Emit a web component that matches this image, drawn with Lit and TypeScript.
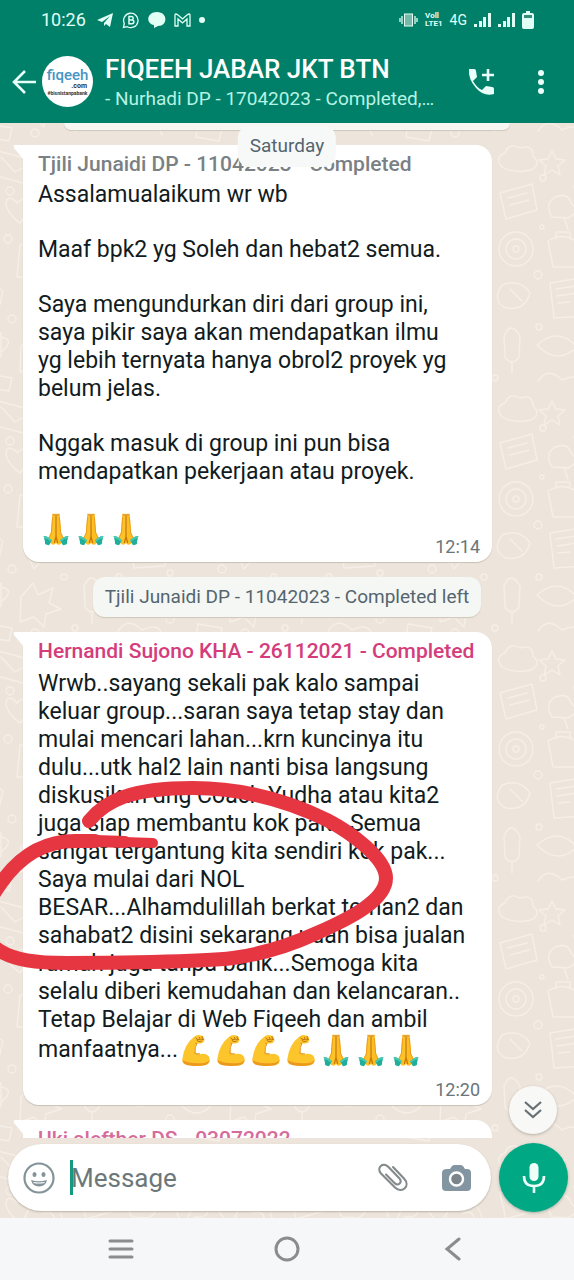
import { LitElement, html, css } from "lit";
import { customElement, property } from "lit/decorators.js";

const pray = () => html`<svg class="emoji" role="img" aria-label="folded hands" width="28" height="33" viewBox="0 0 84 99">
  <path d="M31 2h10l1 88q-4 7-13 4l-13-12 11-24z" fill="#fdc228"/>
  <path d="M53 2H43l-1 88q4 7 13 4l13-12-11-24z" fill="#fdbe22"/>
  <path d="M32 12l-4 48-10 20M52 12l4 48 10 20" fill="none" stroke="#f09c1c" stroke-width="3"/>
  <path d="M42 4v66l-5 20M42 70l5 20" fill="none" stroke="#c97908" stroke-width="4"/>
  <path d="M32 3h8v5h-8zM44 3h8v5h-8z" fill="#e9a13a"/>
  <path d="M5 69q10-1 25 13l-9 15Q6 95 9 87z" fill="#1fae9b"/>
  <path d="M79 69q-10-1-25 13l9 15q15-2 12-10z" fill="#1fae9b"/>
  <path d="M5 69q10-1 25 13l-3 4Q16 76 6 75zM79 69q-10-1-25 13l3 4q11-10 21-11z" fill="#4ccab4"/>
</svg>`;

const arm = () => html`<svg class="emoji" role="img" aria-label="flexed biceps" width="28" height="33" viewBox="0 0 87 99">
  <path d="M38 7Q46-1 60 3q9 2 9 12 0 11-9 12-8 2-14-1-8 16-5 29 8 8 18 5 28-1 27 20-1 16-25 17-27 2-46-3Q-1 91 1 76 7 30 38 7z" fill="#fdc52c"/>
  <path d="M2 80q2 13 16 15 24 4 46 1 20-2 22-18-7 10-26 11-38 2-58-9z" fill="#ec981d"/>
  <path d="M41 26q4 3 6 0-8 14-6 29" fill="none" stroke="#e69119" stroke-width="3"/>
  <path d="M38 56q7 6 18 4" fill="none" stroke="#dd8914" stroke-width="3"/>
  <path d="M43 11q7 9 13 4M54 9q2 9 10 7M46 18q6 8 14 3M62 6q-3 7 6 10" fill="none" stroke="#b86f10" stroke-width="3" stroke-linecap="round"/>
</svg>`;

const wallpaper = html`<svg class="wallpaper" aria-hidden="true" width="100%" height="100%">
  <defs>
    <pattern id="doodles" width="210" height="250" patternUnits="userSpaceOnUse" x="70" y="20">
      <g fill="none" stroke="#f6efe7" stroke-width="1.4" stroke-linejoin="round" stroke-linecap="round">
        <path d="M12 24q-8-10 3-14 4-11 15-5 13-4 13 8 9 8-2 14-16 4-29-3z"/>
        <path d="M62 8l4 8 9 1-7 6 2 9-8-5-8 5 2-9-7-6 9-1z"/>
        <circle cx="104" cy="22" r="15"/><circle cx="99" cy="18" r="3"/><circle cx="110" cy="18" r="3"/><path d="M97 28q7 6 14-1"/>
        <path d="M138 8l34 9-5 24-34-9zM141 14l14 15 13-7"/>
        <path d="M190 6q12 4 6 16l-12 19q-8 2-7-7z"/>
        <path d="M10 50l32-9 5 26-31 9zM18 55l19-5M20 62l19-5"/>
        <path d="M62 74q-8-13 3-20 13-5 16 6 10 9-3 15zM74 75l4 11"/>
        <path d="M102 54l10 31M112 85l14-26M96 60l31-7M126 58q11-4 12 7t-14 9"/>
        <path d="M157 60c-10-13-20 3 3 20 17-20 9-32-3-20z"/>
        <path d="M178 62q20-7 24 13t-20 17-15-18M183 70q10-3 11 5t-9 7"/>
        <circle cx="26" cy="106" r="17"/><circle cx="26" cy="106" r="10"/><circle cx="26" cy="106" r="3"/>
        <path d="M58 98q15-10 31 2l-4 24H63zM66 96v-7h14v7"/>
        <path d="M107 106l33 15-4 7-34-15zM111 108l-3 7"/>
        <path d="M160 102h26l4 32h-33zM166 102q7-16 14 0M167 114h14"/>
        <path d="M12 142q18-7 28 8-5 18-24 15-15-7-4-23zM20 146l12 12"/>
        <path d="M60 140l31-5 4 38-31 2zM66 146l20-3M67 153l20-3M68 160l12-1"/>
        <path d="M116 148l13-10 14 10-4 17h-19zM124 165v-12h9v12"/>
        <path d="M164 155l19-12 17 17-10 8-5-5-11 13z"/>
        <path d="M14 193q7-16 16 0l-1 21q-7 10-14 0zM22 218v12"/>
        <path d="M47 202q21-19 40 2-20 19-40-2zM86 203l10-8v16z"/>
        <path d="M112 190h29v23q-14 14-29 0zM141 194q15 3 0 15"/>
        <path d="M161 204l12-14 5 12 15-7-4 15 12 6-15 5-2 13-10-10-14 5z"/>
        <path d="M48 238q10-15 24-1 17-8 20 5M128 231l24 4-3 13-23-4z"/>
        <circle cx="53" cy="35" r="3"/><circle cx="87" cy="44" r="3"/><circle cx="150" cy="48" r="4"/><circle cx="52" cy="84" r="2"/><circle cx="92" cy="94" r="3"/><circle cx="148" cy="96" r="4"/><circle cx="200" cy="121" r="4"/><circle cx="48" cy="132" r="4"/><circle cx="105" cy="141" r="3"/><circle cx="152" cy="176" r="4"/><circle cx="49" cy="184" r="3"/><circle cx="100" cy="180" r="3"/><circle cx="100" cy="226" r="4"/><circle cx="5" cy="235" r="3"/><circle cx="175" cy="240" r="4"/><circle cx="204" cy="184" r="3"/>
      </g>
    </pattern>
  </defs>
  <rect width="100%" height="100%" fill="url(#doodles)"/>
</svg>`;

@customElement("status-bar")
class StatusBar extends LitElement {
  static styles = css`
    :host { display: flex; align-items: center; justify-content: space-between; height: 40px; padding: 0 40px 0 41px; color: #e2fff6; }
    .group { display: flex; align-items: center; gap: 8px; }
    .clock { font-size: 18px; line-height: 20px; margin-right: 2px; }
    .net { font-size: 14px; line-height: 20px; }
    .volte { font-size: 8px; line-height: 8px; font-weight: 700; }
    .volte span { display: block; }
    .group.right { gap: 7px; }
  `;
  private bars = () => html`<svg width="17" height="16" viewBox="0 0 17 16" fill="#e2fff6" aria-hidden="true"><rect x="0" y="12" width="3" height="3"/><rect x="5" y="9" width="3" height="6"/><rect x="9" y="5" width="3" height="10"/><rect x="14" y="1" width="3" height="14"/></svg>`;
  render() {
    return html`
      <div class="group">
        <span class="clock">10:26</span>
        <svg width="18" height="16" viewBox="0 0 18 16" aria-hidden="true"><path d="M17 1L1 8l5 2 8-6-6 7v3l2-2 4 3z" fill="#e2fff6"/></svg>
        <svg width="18" height="18" viewBox="0 0 18 18" fill="none" stroke="#e2fff6" stroke-width="1.3" aria-hidden="true"><path d="M1.500 16.500l.8-4a7.200 7.200 0 1 1 3 3.200z"/><path d="M7 5.500h2.500a1.700 1.700 0 0 1 0 3.500H7zM7 9h3a1.800 1.800 0 0 1 0 3.700H7z" stroke-width="1.5"/></svg>
        <svg width="18" height="18" viewBox="0 0 18 18" fill="#e2fff6" aria-hidden="true"><path d="M9 1c11 0 11 14 1 14l-4 2v-3C-3 12-1 1 9 1z"/></svg>
        <svg width="17" height="14" viewBox="0 0 17 14" fill="none" stroke="#e2fff6" stroke-width="1.3" aria-hidden="true"><path d="M1 12V2q0-2 3 0l4.500 4L13 2q3-2 3 0v11h-3V6l-4.500 4L4 6v7H1z"/></svg>
        <svg width="8" height="8" viewBox="0 0 8 8" fill="#e2fff6" aria-hidden="true"><circle cx="3" cy="4" r="3"/></svg>
      </div>
      <div class="group right">
        <svg width="19" height="14" viewBox="0 0 19 14" fill="none" stroke="#e2fff6" aria-hidden="true"><rect x="5.500" y="1" width="8" height="12" fill="#76b9a8"/><path d="M3 3v8M1 5v4M16 3v8M18 5v4" stroke-width="1.3"/></svg>
        <span class="volte"><span>Voll</span><span>LTE1</span></span>
        <span class="net">4G</span>
        ${this.bars()}
        ${this.bars()}
        <svg width="12" height="20" viewBox="0 0 12 20" aria-hidden="true"><path d="M4 1h4v2h2q2 0 2 2v12q0 2-2 2H2q-2 0-2-2V5q0-2 2-2h2z" fill="#e2fff6"/><rect x="2" y="5" width="8" height="3" fill="#2f8f7b"/></svg>
      </div>`;
  }
}

@customElement("chat-header")
class ChatHeader extends LitElement {
  static styles = css`
    :host { display: flex; align-items: center; height: 83px; padding: 0 20px 0 12px; color: #fff; }
    button { border: 0; background: none; padding: 0; color: inherit; display: flex; flex: none; }
    .avatar { flex: none; width: 51px; height: 51px; border-radius: 50%; background: #fff; margin-left: 5px; display: flex; flex-direction: column; align-items: center; justify-content: center; }
    .brand { font-size: 15px; line-height: 16px; font-weight: 500; color: #4795c4; }
    .dotcom { font-size: 7px; line-height: 7px; font-weight: 700; color: #333; align-self: flex-end; margin-right: 6px; }
    .tag { font-size: 5px; line-height: 7px; font-weight: 700; color: #333; }
    .titles { flex: 1; min-width: 0; margin-left: 12px; padding-top: 3px; }
    h1 { margin: 0; font-size: 26px; line-height: 32px; font-weight: 500; white-space: nowrap; }
    p { margin: 0; font-size: 19px; line-height: 28px; color: #b5f3e3; white-space: nowrap; }
    .more { margin-left: 32px; }
  `;
  render() {
    return html`
      <button aria-label="Back"><svg width="25" height="26" viewBox="0 0 25 26" fill="none" stroke="#e6fff8" stroke-width="2.6"><path d="M24 13H2M13 2L2 13l11 11"/></svg></button>
      <div class="avatar"><span class="brand">fiqeeh</span><span class="dotcom">.com</span><span class="tag">#bisnistanpabank</span></div>
      <div class="titles"><h1>FIQEEH JABAR JKT BTN</h1><p>- Nurhadi DP - 17042023 - Completed,…</p></div>
      <button aria-label="Add call"><svg width="30" height="30" viewBox="0 0 30 30"><path d="M3 2h5q2 0 2 2l1 6-4 4q4 7 9 9l4-4 6 1q2 0 2 2v5q-10 3-18-6T3 2z" fill="#eafff9"/><path d="M22 2v12M16 8h12" stroke="#eafff9" stroke-width="2.6"/></svg></button>
      <button class="more" aria-label="More options"><svg width="26" height="28" viewBox="0 0 26 28" fill="#eafff9"><circle cx="13" cy="5" r="3"/><circle cx="13" cy="14" r="3"/><circle cx="13" cy="23" r="3"/></svg></button>`;
  }
}

@customElement("chat-bubble")
class ChatBubble extends LitElement {
  @property() sender = "";
  @property() time = "";
  @property() tone = "grey";
  @property({ type: Boolean }) inline = false;
  static styles = css`
    :host { display: block; position: relative; flex: none; margin: 0 82px 0 23px; padding: 7px 12px 5px 15px; background: #fefffe; border-radius: 0 16px 16px 16px; box-shadow: 0 1px 1px #c9c1b5; color: #111b21; }
    .tail { position: absolute; left: -10px; top: 0; }
    .sender { font-size: 21px; line-height: 24px; font-weight: 500; white-space: nowrap; margin-bottom: 5px; }
    .grey { color: #7a8083; }
    .pink { color: #d43c7c; margin-bottom: 7px; }
    .rose { color: #d56c9c; }
    .foot { display: flex; flex-direction: column; }
    .time { font-size: 18px; line-height: 20px; color: #6a7579; align-self: flex-end; margin-top: 13px; }
    .foot.inline { flex-direction: row; justify-content: space-between; }
    .inline .time { margin-top: 24px; }
  `;
  render() {
    return html`
      <svg class="tail" width="11" height="16" viewBox="0 0 11 16" aria-hidden="true"><path d="M11 0H2Q0 0 1 3l10 12z" fill="#fefffe"/></svg>
      <div class="sender ${this.tone}">${this.sender}</div>
      <slot></slot>
      <div class="foot ${this.inline ? "inline" : ""}"><slot name="last"></slot><span class="time">${this.time}</span></div>`;
  }
}

@customElement("message-composer")
class MessageComposer extends LitElement {
  static styles = css`
    :host { position: relative; display: flex; align-items: center; gap: 8px; padding: 5px 6px 6px 8px; }
    button { border: 0; background: none; padding: 0; display: flex; align-items: center; justify-content: center; flex: none; }
    .box { flex: 1; min-width: 0; display: flex; align-items: center; height: 67px; padding: 0 18px 0 14px; box-sizing: border-box; border-radius: 34px; background: #fefffe; box-shadow: 0 1px 2px #b9b1a6; }
    .caret { width: 3px; height: 35px; background: #159a80; margin: 0 -2px 0 14px; flex: none; }
    input { flex: 1; min-width: 0; border: 0; outline: 0; padding: 0; background: none; font: 26px/36px Roboto, sans-serif; color: #111b21; }
    input::placeholder { color: #6c7779; opacity: 1; }
    .camera { margin-left: 32px; }
    .mic { width: 69px; height: 69px; border-radius: 50%; background: #00a884; box-shadow: 0 1px 3px #9fb0a5; }
  `;
  render() {
    return html`
      <div class="box">
        <button aria-label="Emoji"><svg width="34" height="34" viewBox="0 0 34 34" fill="none" stroke="#84929a" stroke-width="2.2"><circle cx="17" cy="17" r="14.500"/><ellipse cx="12.500" cy="13.500" rx="2" ry="2.600" fill="#84929a" stroke="none"/><ellipse cx="21.500" cy="13.500" rx="2" ry="2.600" fill="#84929a" stroke="none"/><path d="M9 19q8 2.500 16 0-1.500 6.500-8 6.500T9 19z" fill="#84929a" stroke="none"/><path d="M11.500 21.500q5.500 1 11 0" stroke="#fefffe" stroke-width="1.200"/></svg></button>
        <span class="caret"></span>
        <input type="text" aria-label="Message" placeholder="Message">
        <button aria-label="Attach"><svg width="32" height="32" viewBox="0 0 32 32" fill="none" stroke="#84898b" stroke-width="2.1" stroke-linecap="round" stroke-linejoin="round"><path d="M16 5l11 11.500c7 7.500-2 15.500-9 9L4 11.500C-1 5.500 6-.5 11.500 5l11 11.500c3.500 4-1.500 8-5 4.500L9 12.500"/></svg></button>
        <button class="camera" aria-label="Camera"><svg width="32" height="30" viewBox="0 0 32 30"><path d="M6 6h3l2-3q1-1 3-1h5q2 0 3 1l2 3h2q4 0 4 4v14q0 4-4 4H5q-4 0-4-4V10q0-4 5-4z" fill="#8395a0"/><circle cx="15.500" cy="16" r="6.500" fill="#7b858a" stroke="#fff" stroke-width="2.4"/></svg></button>
      </div>
      <button class="mic" aria-label="Record voice message"><svg width="24" height="34" viewBox="0 0 24 34" fill="none" stroke="#eefff9" stroke-width="2.6"><rect x="7.500" y="2" width="9" height="18" rx="4.500" fill="#eefff9" stroke="none"/><path d="M2 15q0 10 10 10t10-10M12 25v7"/></svg></button>`;
  }
}

@customElement("app-root")
class AppRoot extends LitElement {
  static styles = css`
    :host { display: flex; flex-direction: column; height: 100vh; overflow: hidden; font-family: Roboto, sans-serif; }
    .top { background: #008069; flex: none; }
    .chat { position: relative; flex: 1; min-height: 0; display: flex; flex-direction: column; background: #ede4db; overflow: hidden; }
    .wallpaper { position: absolute; inset: 0; }
    .list { position: relative; flex: 1; min-height: 0; overflow: hidden; display: flex; flex-direction: column; gap: 15px; }
    .previous { flex: none; height: 7px; margin: 0 64px; border-radius: 0 0 12px 12px; background: #f6f6f3; box-shadow: 0 1px 1px #cfc7bc; }
    .date { position: absolute; top: 3px; left: 50%; transform: translateX(-50%); padding: 7px 12px 8px; border-radius: 12px; background: #f7f9f8; color: #54656f; font-size: 19px; line-height: 26px; }
    .notice { flex: none; align-self: center; margin: 0; padding: 7px 12px; border-radius: 12px; background: #f5f7f4; box-shadow: 0 1px 1px #cfc7bc; color: #54656f; font-size: 19px; line-height: 26px; }
    .text { margin: 0 0 27px; font-size: 23px; line-height: 28px; }
    .text.end { margin: 0; }
    .emoji { vertical-align: middle; margin: 0 3px 0 4px; }
    .ink { position: absolute; left: 0; top: 650px; pointer-events: none; }
    .jump { position: absolute; right: 17px; bottom: 84px; width: 48px; height: 48px; border: 0; border-radius: 50%; padding: 0; background: #f8f9f7; box-shadow: 0 1px 3px #b8b0a6; display: flex; align-items: center; justify-content: center; }
    nav { flex: none; display: flex; height: 62px; padding: 0 38px; background: #f6f7f9; }
    nav button { flex: 1; border: 0; background: none; padding: 0; display: flex; align-items: center; justify-content: center; }
    message-composer { flex: none; }
  `;
  render() {
    return html`
      <header class="top"><status-bar></status-bar><chat-header></chat-header></header>
      <main class="chat">
        ${wallpaper}
        <div class="list">
          <div class="previous"></div>
          <chat-bubble sender="Tjili Junaidi DP - 11042023 - Completed" time="12:14" inline>
            <p class="text">Assalamualaikum wr wb</p>
            <p class="text">Maaf bpk2 yg Soleh dan hebat2 semua.</p>
            <p class="text">Saya mengundurkan diri dari group ini, saya pikir saya akan mendapatkan ilmu<br>yg lebih ternyata hanya obrol2 proyek yg belum jelas.</p>
            <p class="text">Nggak masuk di group ini pun bisa mendapatkan pekerjaan atau proyek.</p>
            <p class="text end" slot="last">${pray()}${pray()}${pray()}</p>
          </chat-bubble>
          <p class="notice">Tjili Junaidi DP - 11042023 - Completed left</p>
          <chat-bubble sender="Hernandi Sujono KHA - 26112021 - Completed" tone="pink" time="12:20">
            <p class="text end">Wrwb..sayang sekali pak kalo sampai keluar group...saran saya tetap stay dan mulai mencari lahan...krn kuncinya itu dulu...utk hal2 lain nanti bisa langsung diskusikan dng Coach Yudha atau kita2 juga siap membantu kok pak...Semua sangat tergantung kita sendiri kok pak... Saya mulai dari NOL<br>BESAR...Alhamdulillah berkat teman2 dan sahabat2 disini sekarang udah bisa jualan rumah juga tanpa bank...Semoga kita selalu diberi kemudahan dan kelancaran.. Tetap Belajar di Web Fiqeeh dan ambil manfaatnya...${arm()}${arm()}${arm()}${arm()}${pray()}${pray()}${pray()}</p>
          </chat-bubble>
          <chat-bubble sender="Uki alefther DS - 03072022" tone="rose"></chat-bubble>
          <div class="date">Saturday</div>
          <svg class="ink" aria-hidden="true" width="400" height="210" viewBox="0 773 400 210" fill="none" stroke="#e63642" stroke-linecap="round" stroke-linejoin="round">
            <path stroke-width="14" d="M89 821C105 801 130 788 193 788 245 788 292 803 327 820 350 832 386 858 386 878 386 900 351 918 317 933 293 944 262 954 233 958 200 962 105 963 67 963 35 963 15 960 0 951-26 935-16 906 1 883 17 860 40 841 75 841H95"/>
            <path stroke-width="12" d="M95 841L125 842"/>
            <path stroke-width="10" d="M95 841L153 843"/>
          </svg>
        </div>
        <message-composer></message-composer>
        <button class="jump" aria-label="Scroll to latest"><svg width="20" height="18" viewBox="0 0 20 18" fill="none" stroke="#667075" stroke-width="2.2"><path d="M2 1l8 7 8-7M2 9l8 7 8-7"/></svg></button>
      </main>
      <nav aria-label="System navigation">
        <button aria-label="Recent apps"><svg width="28" height="24" viewBox="0 0 28 24" stroke="#8b8c8e" stroke-width="3" stroke-linecap="round"><path d="M3 4h22M3 12h22M3 20h22"/></svg></button>
        <button aria-label="Home"><svg width="28" height="28" viewBox="0 0 28 28" fill="none" stroke="#8b8c8e" stroke-width="3"><circle cx="14" cy="14" r="11"/></svg></button>
        <button aria-label="Back"><svg width="18" height="24" viewBox="0 0 18 24" fill="none" stroke="#8b8c8e" stroke-width="3" stroke-linecap="round"><path d="M15 2L3 12l12 10"/></svg></button>
      </nav>`;
  }
}
